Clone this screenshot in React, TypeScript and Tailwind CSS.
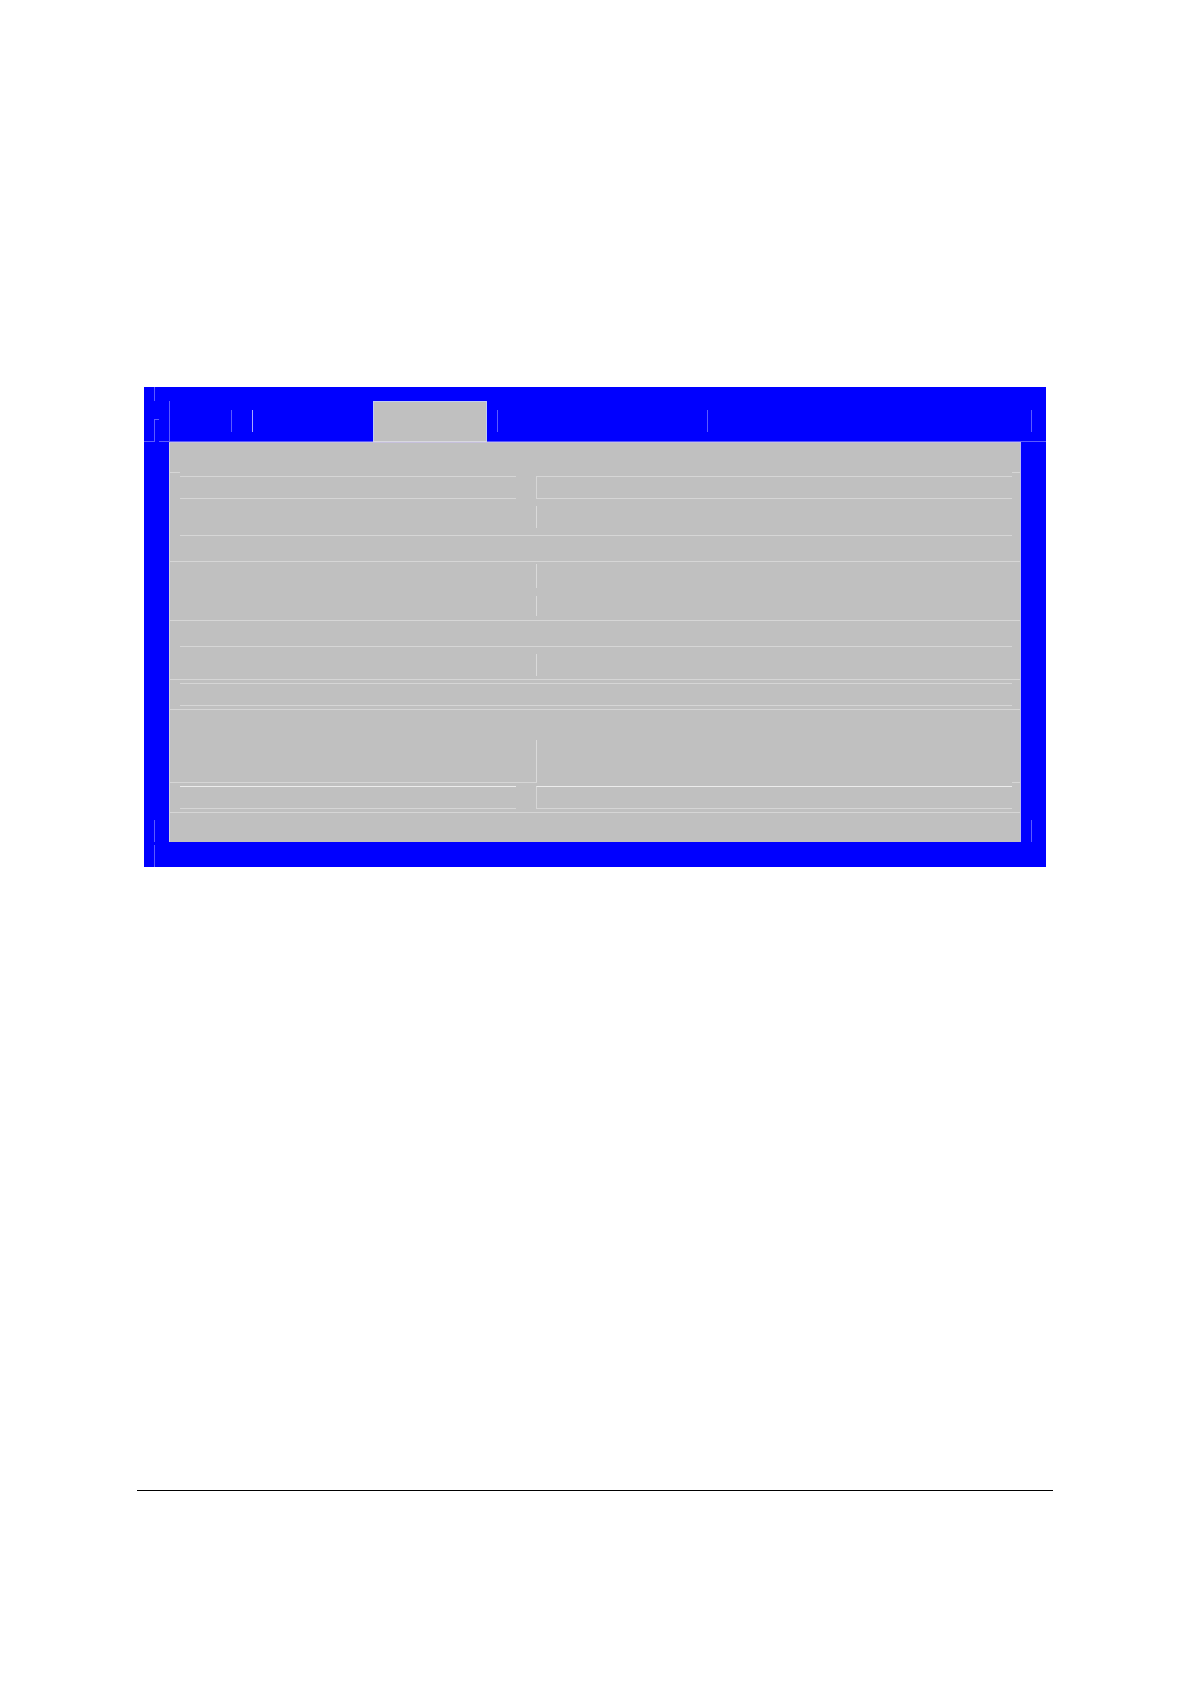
import clsx from 'clsx';

export default function App() {
  return (
    <main className="w-full bg-white px-[137px] pt-[387px] pb-[193px]">
      <section className="mx-[7px] bg-[#0000ff]">
        <MenuBar />
        <div className="flex">
          <SideFrame />
          <SetupPanel />
          <SideFrame />
        </div>
        <BottomFrame />
      </section>

      <hr className="mt-[623px] border-t border-black" />
    </main>
  );
}

function MenuBar() {
  return (
    <header>
      <div className="flex h-[14px] pl-[10px]">
        <div className="w-px bg-[#5a5aff]" />
      </div>

      <div className="flex h-10">
        {/* Left corner bracket */}
        <div className="w-[25px] pt-[18px] pl-[10px]">
          <div className="h-[22px] w-[5px]">
            <div className="h-px bg-[#5a5aff]" />
            <div className="h-[21px] w-px bg-[#5a5aff]" />
          </div>
        </div>

        <div className="flex flex-1 border-l border-[#5a5aff]">
          <div className="w-[61px]" />
          <TabDivider />
          <div className="w-5" />
          <TabDivider bright />
          <div className="w-[120px]" />
          <div className="w-[114px] border-x border-t border-[#c0ccf4] bg-[#c0c0c0]" />
          <div className="w-[10px]" />
          <TabDivider />
          <div className="w-[209px]" />
          <TabDivider />
          <div className="flex-1" />
          <TabDivider />
          <div className="w-[14px]" />
        </div>
      </div>

      <div className="flex h-px">
        <div className="w-[11px] bg-[#5a5aff]" />
        <div className="w-1" />
        <div className="w-[214px] bg-[#5a5aff]" />
        <div className="w-[114px] bg-[#d8d8e0]" />
        <div className="flex-1 bg-[#5a5aff]" />
      </div>
    </header>
  );
}

function TabDivider({ bright }: { bright?: boolean }) {
  return <div className={clsx('mt-[9px] h-[22px] w-px', bright ? 'bg-[#a8a8ff]' : 'bg-[#5a5aff]')} />;
}

function SideFrame() {
  return (
    <div className="flex w-[25px] shrink-0 items-end pl-[10px]">
      <div className="h-[22px] w-px bg-[#5a5aff]" />
    </div>
  );
}

function SetupPanel() {
  return (
    <div className="flex-1 border-t border-r border-l border-t-[#c6c0dc] border-r-[#b8b8f0] border-l-[#d4d4dc] bg-[#c0c0c0] pt-[29px] pb-[29px]">
      <div className="flex h-px justify-between">
        <div className="w-[10px] bg-[#d6d6d6]" />
        <div className="w-2 bg-[#d6d6d6]" />
      </div>
      <FieldRow />

      <ValueMark className="mt-[7px] h-[22px]" />
      <InnerLine className="mt-[7px]" />
      <FullLine className="mt-[25px]" />

      <ValueMark className="mt-[2px] h-6" />
      <ValueMark className="mt-2 h-5" />
      <FullLine className="mt-1" />
      <InnerLine className="mt-[25px]" />

      <ValueMark className="mt-[7px] h-[22px]" />
      <FullLine className="mt-[3px]" />
      <div className="mt-[3px] mr-2 ml-[10px] h-[23px] border-y border-[#d6d6d6]" />
      <FullLine className="mt-[3px]" />

      <ValueMark className="mt-[30px] h-[42px]" />
      <div className="flex h-px justify-between">
        <div className="w-[367px] bg-[#d6d6d6]" />
        <div className="w-2 bg-[#d6d6d6]" />
      </div>
      <FieldRow bright />
      <FullLine className="mt-[3px]" />
    </div>
  );
}

// Label cell and value cell, outlined separately
function FieldRow({ bright }: { bright?: boolean }) {
  const top = bright ? 'border-t-[#ececec]' : 'border-t-[#d6d6d6]';
  return (
    <div className="mt-[3px] mr-2 ml-[10px] flex h-[23px] gap-5">
      <div className={clsx('w-[336px] border-y border-b-[#d6d6d6]', top)} />
      <div className={clsx('flex-1 border-y border-l border-b-[#d6d6d6] border-l-[#d6d6d6]', top)} />
    </div>
  );
}

function ValueMark({ className }: { className: string }) {
  return <div className={clsx('ml-[366px] border-l border-[#dadada]', className)} />;
}

function InnerLine({ className }: { className: string }) {
  return <div className={clsx('mr-2 ml-[10px] h-px bg-[#d6d6d6]', className)} />;
}

function FullLine({ className }: { className: string }) {
  return <div className={clsx('h-px bg-[#d6d6d6]', className)} />;
}

function BottomFrame() {
  return (
    <footer className="h-[25px] pt-[3px] pl-[10px]">
      <div className="h-[22px] w-px bg-[#5a5aff]" />
    </footer>
  );
}
